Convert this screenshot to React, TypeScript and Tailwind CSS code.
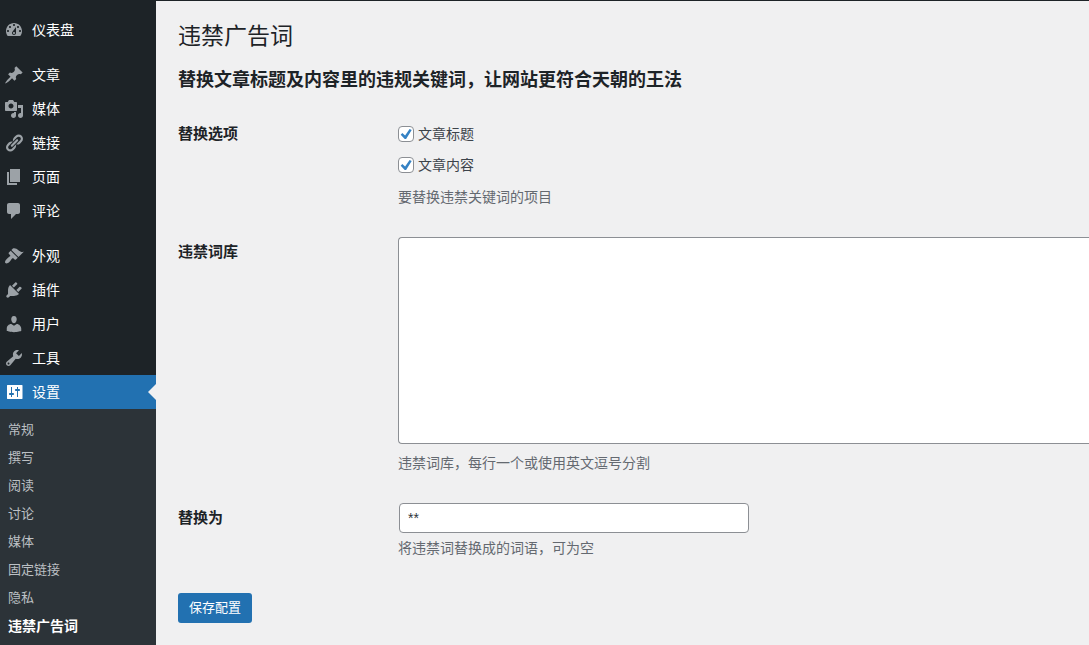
import React, { useState } from 'react';

interface MenuEntry {
  label: string;
  path: string;
  gap?: boolean;
}

const menu: MenuEntry[] = [
  {
    label: '仪表盘',
    path: 'M3.76 16h12.48c1.1-1.37 1.76-3.11 1.76-5 0-4.42-3.58-8-8-8s-8 3.58-8 8c0 1.89.66 3.63 1.76 5zM10 4c.55 0 1 .45 1 1s-.45 1-1 1-1-.45-1-1 .45-1 1-1zM6 6c.55 0 1 .45 1 1s-.45 1-1 1-1-.45-1-1 .45-1 1-1zm8 0c.55 0 1 .45 1 1s-.45 1-1 1-1-.45-1-1 .45-1 1-1zm-5.37 5.55L12 7v6c0 1.1-.9 2-2 2s-2-.9-2-2c0-.57.24-1.08.63-1.45zM4 10c.55 0 1 .45 1 1s-.45 1-1 1-1-.45-1-1 .45-1 1-1zm12 0c.55 0 1 .45 1 1s-.45 1-1 1-1-.45-1-1 .45-1 1-1zm-5 3c0-.55-.45-1-1-1s-1 .45-1 1 .45 1 1 1 1-.45 1-1z',
  },
  {
    label: '文章',
    gap: true,
    path: 'M10.44 3.02l1.82-1.82 6.36 6.35-1.83 1.82c-1.05-.68-2.48-.57-3.41.36l-.75.75c-.92.93-1.04 2.35-.35 3.41l-1.83 1.82-2.41-2.41-2.8 2.79c-.42.42-3.38 2.71-3.8 2.29s1.86-3.39 2.28-3.81l2.79-2.79L4.1 9.36l1.83-1.82c1.05.69 2.48.57 3.4-.36l.75-.75c.93-.92 1.05-2.35.36-3.41z',
  },
  {
    label: '媒体',
    path: 'M13 11V4c0-.55-.45-1-1-1h-1.67L9 1H5L3.67 3H2c-.55 0-1 .45-1 1v7c0 .55.45 1 1 1h10c.55 0 1-.45 1-1zM7 4.5c1.38 0 2.5 1.12 2.5 2.5S8.38 9.5 7 9.5 4.5 8.38 4.5 7 5.62 4.5 7 4.5zM14 6h5v10.5c0 1.38-1.12 2.5-2.5 2.5S14 17.88 14 16.5s1.12-2.5 2.5-2.5c.17 0 .34.02.5.05V9h-3V6zm-4 8.05V13h2v3.5c0 1.38-1.12 2.5-2.5 2.5S7 17.88 7 16.5 8.12 14 9.5 14c.17 0 .34.02.5.05z',
  },
  {
    label: '链接',
    path: 'M17.74 2.76c1.68 1.69 1.68 4.41 0 6.1l-1.53 1.52c-1.12 1.12-2.7 1.47-4.14 1.09l2.62-2.61.76-.77.76-.76c.84-.84.84-2.2 0-3.04-.84-.85-2.2-.85-3.04 0l-.77.76-3.38 3.38c-.37-1.44-.02-3.02 1.1-4.14l1.52-1.53c1.69-1.68 4.42-1.68 6.1 0zM8.59 13.43l5.34-5.34c.42-.42.42-1.1 0-1.52-.44-.43-1.13-.39-1.53 0l-5.33 5.34c-.42.42-.42 1.1 0 1.52.44.43 1.13.39 1.52 0zm-.76 2.29l4.14-4.15c.38 1.44.03 3.02-1.09 4.14l-1.52 1.53c-1.69 1.68-4.41 1.68-6.1 0-1.68-1.68-1.68-4.42 0-6.1l1.53-1.52c1.12-1.12 2.7-1.47 4.14-1.1l-4.14 4.15c-.85.84-.85 2.2 0 3.05.84.84 2.2.84 3.04 0z',
  },
  { label: '页面', path: 'M6 15V2h10v13H6zm-1 1h8v2H3V5h2v11z' },
  {
    label: '评论',
    path: 'M5 2h9c1.1 0 2 .9 2 2v7c0 1.1-.9 2-2 2h-2l-5 5v-5H5c-1.1 0-2-.9-2-2V4c0-1.1.9-2 2-2z',
  },
  {
    label: '外观',
    gap: true,
    path: 'M14.48 11.06L7.41 3.99l1.5-1.5c.5-.56 2.3-.47 3.51.32 1.21.8 1.43 1.28 2.91 2.1 1.18.64 2.45 1.26 4.45.85zm-.71.71L6.7 4.7 4.93 6.47c-.39.39-.39 1.02 0 1.41l1.06 1.06c.39.39.39 1.03 0 1.42-.6.6-1.43 1.11-2.21 1.69-.35.26-.7.53-1.01.84C1.43 14.23.4 16.08 1.4 17.07c.99 1 2.84-.03 4.18-1.36.31-.31.58-.66.85-1.02.57-.78 1.08-1.61 1.69-2.21.39-.39 1.02-.39 1.41 0l1.06 1.06c.39.39 1.02.39 1.41 0z',
  },
  {
    label: '插件',
    path: 'M13.11 4.36L9.87 7.6 8 5.73l3.24-3.24c.35-.34 1.05-.2 1.56.32.52.51.66 1.21.31 1.55zm-8 1.77l.91-1.12 9.01 9.01-1.19.84c-.71.71-2.63 1.16-3.82 1.16H6.14L4.9 17.26c-.59.59-1.54.59-2.12 0-.59-.58-.59-1.53 0-2.12l1.24-1.24v-3.88c0-1.13.4-3.19 1.09-3.89zm7.26 3.97l3.24-3.24c.34-.35 1.04-.21 1.55.31.52.51.66 1.21.31 1.55l-3.24 3.25z',
  },
  {
    label: '用户',
    path: 'M10 9.25c-2.27 0-2.73-3.44-2.73-3.44C7 4.02 7.82 2 9.97 2c2.16 0 2.98 2.02 2.71 3.81 0 0-.41 3.44-2.68 3.44zm0 2.57L12.72 10c2.39 0 4.52 2.33 4.52 4.53v2.49s-3.65 1.13-7.24 1.13c-3.65 0-7.24-1.13-7.24-1.13v-2.49c0-2.25 1.94-4.48 4.47-4.48z',
  },
  {
    label: '工具',
    path: 'M16.68 9.77c-1.34 1.34-3.3 1.67-4.95.99l-5.41 6.52c-.99.99-2.59.99-3.58 0s-.99-2.59 0-3.57l6.52-5.42c-.68-1.65-.35-3.61.99-4.95 1.28-1.28 3.12-1.62 4.72-1.06l-2.89 2.89 2.82 2.82 2.86-2.87c.53 1.58.18 3.39-1.08 4.65zM3.81 16.21c.4.39 1.04.39 1.43 0 .4-.4.4-1.04 0-1.43-.39-.4-1.03-.4-1.43 0-.39.39-.39 1.03 0 1.43z',
  },
  {
    label: '设置',
    path: 'M3.5 3h14.5c.3 0 .5.2.5.5v13c0 .3-.2.5-.5.5H3.5c-.3 0-.5-.2-.5-.5v-13c0-.3.2-.5.5-.5zM7 5v6H6c-.6 0-1 .4-1 1s.4 1 1 1h1v2h1v-2h1c.6 0 1-.4 1-1s-.4-1-1-1H8V5zM13 5v2h-1c-.6 0-1 .4-1 1s.4 1 1 1h1v6h1V9h1c.6 0 1-.4 1-1s-.4-1-1-1h-1V5z',
  },
];

const submenu = ['常规', '撰写', '阅读', '讨论', '媒体', '固定链接', '隐私', '违禁广告词'];

const Sidebar: React.FC = () => {
  const current = '设置';
  const currentSub = '违禁广告词';

  return (
    <nav className="w-[156px] shrink-0 bg-[#1d2327] pt-3">
      <ul>
        {menu.map(item => {
          const active = item.label === current;
          return (
            <li key={item.label} className={item.gap ? 'mt-[11px]' : ''}>
              <a href="#" className={`relative flex h-[34px] items-center gap-2 pl-1 text-sm text-white ${active ? 'bg-[#2271b1]' : ''}`}>
                <svg viewBox="0 0 20 20" className={`size-5 ${active ? 'fill-white' : 'fill-[#9ca2a7]'}`} aria-hidden="true">
                  <path fillRule="evenodd" d={item.path} />
                </svg>
                {item.label}
                {active && <span className="absolute right-0 top-[9px] border-y-8 border-r-8 border-y-transparent border-r-[#f0f0f1]" />}
              </a>
            </li>
          );
        })}
      </ul>
      <ul className="bg-[#2c3338] pt-[7px] pb-2">
        {submenu.map(label => (
          <li key={label}>
            <a href="#" className={`flex h-7 items-center pl-2 ${label === currentSub ? 'text-sm font-bold text-white' : 'text-[13px] text-[#bcc0c4]'}`}>{label}</a>
          </li>
        ))}
      </ul>
    </nav>
  );
};

interface CheckProps {
  label: string;
  checked: boolean;
  onChange: (v: boolean) => void;
}

const Check: React.FC<CheckProps> = ({ label, checked, onChange }) => (
  <label className="flex h-[31px] items-center gap-1">
    <span className="grid size-4">
      <input type="checkbox" checked={checked} onChange={e => onChange(e.target.checked)} className="col-start-1 row-start-1 size-4 appearance-none rounded border border-[#8c8f94] bg-white" />
      {checked && (
        <svg viewBox="0 0 16 16" className="pointer-events-none col-start-1 row-start-1 size-4" aria-hidden="true">
          <path d="M11.6 2.9 13.7 4 8.1 13.1H6.7L2.7 8.7l1.6-1.7 2.8 2.4z" fill="#3582c4" />
        </svg>
      )}
    </span>
    {label}
  </label>
);

const App: React.FC = () => {
  const [replaceTitle, setReplaceTitle] = useState(true);
  const [replaceContent, setReplaceContent] = useState(true);
  const [words, setWords] = useState('');
  const [replacement, setReplacement] = useState('**');

  return (
    <div className="flex min-h-screen border-t border-[#1d2327] bg-[#f0f0f1] font-['Liberation_Sans','Noto_Sans_CJK_SC',sans-serif] text-sm text-[#3c434a]">
      <div className="flex bg-[#2c3338]">
        <Sidebar />
      </div>
      <main className="min-w-0 flex-1 pl-[22px] pt-5">
        <h1 className="text-[23px] leading-[30px] text-[#1d2327]">违禁广告词</h1>
        <h2 className="mt-[15px] text-lg leading-7 font-bold text-[#1d2327]">替换文章标题及内容里的违规关键词，让网站更符合天朝的王法</h2>
        <form onSubmit={e => e.preventDefault()}>
          <fieldset className="mt-6 grid grid-cols-[220px_minmax(0,1fr)]">
            <div className="text-[15px] leading-[31px] font-bold text-[#1d2327]">替换选项</div>
            <div>
              <Check label="文章标题" checked={replaceTitle} onChange={setReplaceTitle} />
              <Check label="文章内容" checked={replaceContent} onChange={setReplaceContent} />
              <p className="mt-0.5 leading-[31px] text-[#646970]">要替换违禁关键词的项目</p>
            </div>
          </fieldset>
          <div className="mt-6 grid grid-cols-[220px_minmax(0,1fr)]">
            <label htmlFor="words" className="text-[15px] leading-[29px] font-bold text-[#1d2327]">违禁词库</label>
            <div>
              <textarea id="words" value={words} onChange={e => setWords(e.target.value)} className="block h-[207px] w-full resize-none rounded-l border border-r-0 border-[#8c8f94] bg-white px-2 py-1 outline-none" />
              <p className="mt-2 leading-[22px] text-[#646970]">违禁词库，每行一个或使用英文逗号分割</p>
            </div>
          </div>
          <div className="mt-7 grid grid-cols-[220px_minmax(0,1fr)]">
            <label htmlFor="replacement" className="text-[15px] leading-[31px] font-bold text-[#1d2327]">替换为</label>
            <div>
              <input id="replacement" type="text" value={replacement} onChange={e => setReplacement(e.target.value)} className="m-px block h-[30px] w-[350px] rounded border border-[#8c8f94] bg-white px-2 text-[#2c3338] outline-none" />
              <p className="mt-1 leading-[22px] text-[#646970]">将违禁词替换成的词语，可为空</p>
            </div>
          </div>
          <button type="submit" className="mt-[34px] h-[30px] rounded-[3px] bg-[#2271b1] px-[11px] text-[13px] text-white">保存配置</button>
        </form>
      </main>
    </div>
  );
};

export default App;
